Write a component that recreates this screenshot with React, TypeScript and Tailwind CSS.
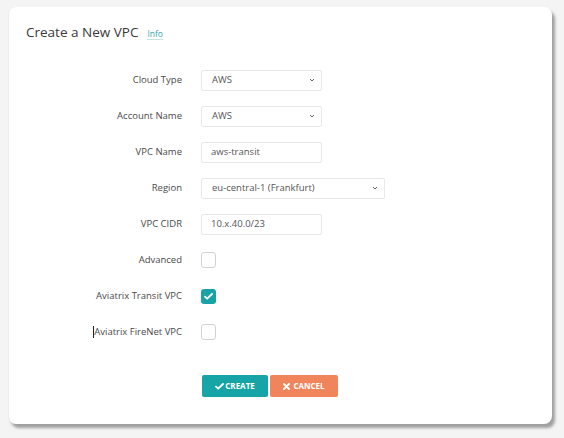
import React from 'react';

const font = { fontFamily: '"Open Sans", "Liberation Sans", sans-serif' };

const Chevron = () => (
  <svg width="6" height="4" viewBox="0 0 6 4" className="text-[#666]">
    <path d="M1 1l2 2 2-2" fill="none" stroke="currentColor" strokeWidth="1" />
  </svg>
);

const SelectBox: React.FC<{ value: string; width: string }> = ({ value, width }) => (
  <div className={`${width} h-[21px] border border-[#e8e8e8] rounded-[2px] bg-white flex items-center justify-between pl-[10px] pr-[6px] text-[9.5px] text-[#555]`}>
    <span>{value}</span>
    <Chevron />
  </div>
);

const TextBox: React.FC<{ value: string }> = ({ value }) => (
  <div className="w-[121px] h-[21px] border border-[#e8e8e8] rounded-[2px] bg-white flex items-center pl-[9px] text-[9.5px] text-[#555]">
    {value}
  </div>
);

const Check: React.FC<{ checked?: boolean }> = ({ checked }) =>
  checked ? (
    <div className="w-[15px] h-[15px] rounded-[3px] bg-[#1aa3a6] flex items-center justify-center">
      <svg width="9" height="7" viewBox="0 0 9 7">
        <path d="M1 3.6l2.2 2.1L8 1" fill="none" stroke="white" strokeWidth="1.8" strokeLinecap="round" strokeLinejoin="round" />
      </svg>
    </div>
  ) : (
    <div className="w-[15px] h-[16px] rounded-[3px] border border-[#d2d2d2] bg-white" />
  );

const rows: { label: React.ReactNode; field: React.ReactNode }[] = [
  { label: 'Cloud Type', field: <SelectBox value="AWS" width="w-[121px]" /> },
  { label: 'Account Name', field: <SelectBox value="AWS" width="w-[121px]" /> },
  { label: 'VPC Name', field: <TextBox value="aws-transit" /> },
  { label: 'Region', field: <SelectBox value="eu-central-1 (Frankfurt)" width="w-[184px]" /> },
  { label: 'VPC CIDR', field: <TextBox value="10.x.40.0/23" /> },
  { label: 'Advanced', field: <Check /> },
  { label: 'Aviatrix Transit VPC', field: <Check checked /> },
  {
    label: (
      <span className="flex items-center">
        <span className="inline-block w-[1px] h-[12px] bg-[#222]" />
        Aviatrix FireNet VPC
      </span>
    ),
    field: <Check />,
  },
];

export default function App() {
  return (
    <div className="w-[564px] h-[438px] bg-[#f4f4f4] pt-[7px] pl-[8px]" style={font}>
      <div className="w-[544px] h-[417px] bg-white rounded-lg shadow-[3px_4px_3px_rgba(0,0,0,0.35)] border-l border-[#ececec]">
        <div className="pt-[17px] pl-[17px] flex items-baseline gap-[9px]">
          <h1 className="text-[13.5px] leading-[16px] text-[#3a3a3a]">Create a New VPC</h1>
          <span className="text-[8.5px] text-[#3a9fae] border-b border-[#bfe3e6] leading-[10px]">Info</span>
        </div>

        <div className="mt-[22px] flex flex-col">
          {rows.map((r, i) => (
            <div key={i} className="h-[36px] flex items-center">
              <div className="w-[173px] text-right text-[9.5px] text-[#4a4a4a] flex justify-end">{r.label}</div>
              <div className="ml-[19px]">{r.field}</div>
            </div>
          ))}
        </div>

        <div className="mt-[25px] pl-[193px] flex gap-[2px]">
          <button className="w-[66px] h-[22px] bg-[#17a4a6] rounded-[2px] text-white text-[8px] font-bold flex items-center justify-center gap-[1px]">
            <svg width="9" height="7" viewBox="0 0 9 7">
              <path d="M1 3.6l2.2 2.1L8 1" fill="none" stroke="white" strokeWidth="1.8" strokeLinecap="round" strokeLinejoin="round" />
            </svg>
            CREATE
          </button>
          <button className="w-[68px] h-[22px] bg-[#f0845a] rounded-[2px] text-white text-[8px] font-bold flex items-center justify-center gap-[3px]">
            <svg width="7" height="7" viewBox="0 0 7 7">
              <path d="M1 1l5 5M6 1L1 6" fill="none" stroke="white" strokeWidth="1.8" strokeLinecap="round" />
            </svg>
            CANCEL
          </button>
        </div>
      </div>
    </div>
  );
}
